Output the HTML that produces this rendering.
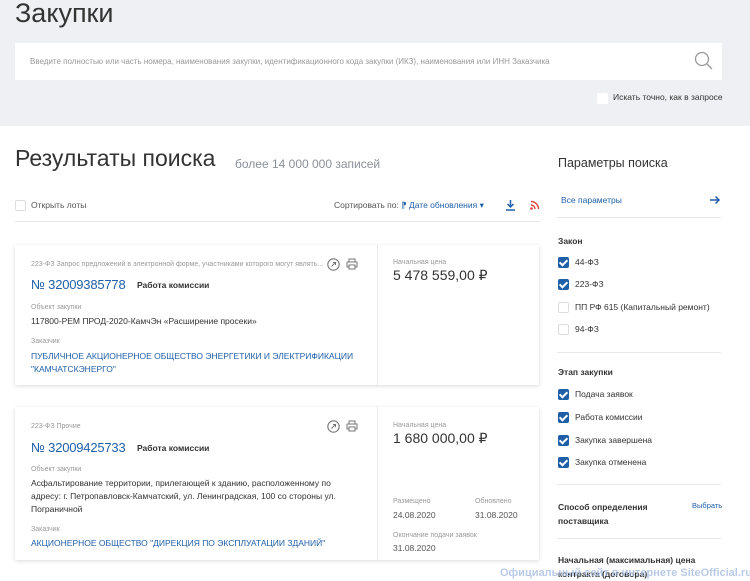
<!DOCTYPE html>
<html><head><meta charset="utf-8"><style>
*{margin:0;padding:0;box-sizing:border-box}
body{width:750px;height:581px;overflow:hidden;background:#fff;font-family:"Liberation Sans","Noto Sans CJK SC",sans-serif;color:#333;position:relative}
.a{position:absolute;white-space:nowrap}
.top{position:absolute;left:0;top:0;width:750px;height:126px;background:#eef0f3}
.search{position:absolute;left:15px;top:43px;width:707px;height:37px;background:#fff}
.card{position:absolute;left:15px;width:524px;background:#fff;box-shadow:0 1px 4px rgba(0,0,0,.15)}
.card .div{position:absolute;left:362px;top:0;bottom:0;width:1px;background:#e6e8ec}
.sm{font-size:7px;color:#999}
.blue{color:#1f5fa8}
.num{font-size:13px;letter-spacing:-0.2px}
.cb{position:absolute;width:11px;height:11px;border-radius:2px}
.on{background:#1f5fa8}
.on:after{content:"";position:absolute;left:3px;top:1px;width:3px;height:6px;border:solid #fff;border-width:0 2px 2px 0;transform:rotate(45deg)}
.off{border:1px solid #ddd;background:#fff}
.lb{font-size:8.5px;color:#333}
.hr{position:absolute;left:557px;width:164px;height:1px;background:#e6e8ec}
</style></head><body>
<div class="top"></div>
<div class="a" style="left:15px;top:-2px;font-size:27px;color:#333">Закупки</div>
<div class="search"></div>
<div class="a" style="left:30px;top:57px;font-size:8px;color:#999">Введите полностью или часть номера, наименования закупки, идентификационного кода закупки (ИКЗ), наименования или ИНН Заказчика</div>
<svg class="a" style="left:694px;top:51px" width="20" height="20" viewBox="0 0 20 20"><circle cx="8" cy="8" r="6.5" fill="none" stroke="#999" stroke-width="1.3"/><path d="M13 13l5 5" stroke="#999" stroke-width="1.3"/></svg>
<div class="cb off" style="left:597px;top:93px;border:none"></div>
<div class="a" style="left:613px;top:92px;font-size:8.5px;color:#333">Искать точно, как в запросе</div>

<div class="a" style="left:15px;top:145px;font-size:23px;color:#333">Результаты поиска</div>
<div class="a" style="left:235px;top:157px;font-size:12px;color:#8a9099">более 14 000 000 записей</div>
<div class="cb off" style="left:15px;top:200px"></div>
<div class="a" style="left:31px;top:200px;font-size:8.5px;color:#555">Открыть лоты</div>
<div class="a" style="left:334px;top:200px;font-size:8.5px;color:#555">Сортировать по: <span class="blue">⁋ Дате обновления ▾</span></div>
<svg class="a" style="left:505px;top:199px" width="11" height="12" viewBox="0 0 11 12"><path d="M5.5 1v7M2.5 5l3 3 3-3M1 11h9" stroke="#1f5fa8" stroke-width="1.5" fill="none"/></svg>
<svg class="a" style="left:530px;top:200px" width="10" height="10" viewBox="0 0 10 10"><circle cx="1.5" cy="8.5" r="1.3" fill="#e0443a"/><path d="M1 5a4 4 0 0 1 4 4M1 1.5a7.5 7.5 0 0 1 7.5 7.5" stroke="#e0443a" stroke-width="1.4" fill="none"/></svg>
<div style="position:absolute;left:15px;top:221px;width:525px;height:1px;background:#e6e8ec"></div>

<div class="card" style="top:245px;height:140px"><div class="div"></div></div>
<div class="a sm" style="left:31px;top:261px">223-ФЗ Запрос предложений в электронной форме, участниками которого могут являть...</div>
<svg class="a" style="left:327px;top:258px" width="13" height="13" viewBox="0 0 13 13"><circle cx="6.5" cy="6.5" r="5.7" fill="none" stroke="#777" stroke-width="1.1"/><path d="M4.5 8.5l4-4M6 4.5h2.5V7" stroke="#777" stroke-width="1" fill="none"/></svg>
<svg class="a" style="left:346px;top:258px" width="12" height="12" viewBox="0 0 12 12"><path d="M3 4V1h6v3M1 4h10v5H9M3 9H1V4M3 7h6v4H3z" stroke="#777" stroke-width="1" fill="none"/></svg>
<div class="a blue num" style="left:31px;top:277px">№ 32009385778</div>
<div class="a" style="left:137px;top:280px;font-size:8.5px;font-weight:bold">Работа комиссии</div>
<div class="a sm" style="left:31px;top:304px">Объект закупки</div>
<div class="a" style="left:31px;top:316px;font-size:8.5px">117800-РЕМ ПРОД-2020-КамчЭн «Расширение просеки»</div>
<div class="a sm" style="left:31px;top:338px">Заказчик</div>
<div class="a blue" style="left:31px;top:350px;font-size:8.5px;line-height:13px">ПУБЛИЧНОЕ АКЦИОНЕРНОЕ ОБЩЕСТВО ЭНЕРГЕТИКИ И ЭЛЕКТРИФИКАЦИИ<br>"КАМЧАТСКЭНЕРГО"</div>
<div class="a sm" style="left:393px;top:259px">Начальная цена</div>
<div class="a" style="left:393px;top:267px;font-size:14px">5 478 559,00 ₽</div>

<div class="card" style="top:407px;height:153px"><div class="div"></div></div>
<div class="a sm" style="left:31px;top:423px">223-ФЗ Прочие</div>
<svg class="a" style="left:327px;top:420px" width="13" height="13" viewBox="0 0 13 13"><circle cx="6.5" cy="6.5" r="5.7" fill="none" stroke="#777" stroke-width="1.1"/><path d="M4.5 8.5l4-4M6 4.5h2.5V7" stroke="#777" stroke-width="1" fill="none"/></svg>
<svg class="a" style="left:346px;top:420px" width="12" height="12" viewBox="0 0 12 12"><path d="M3 4V1h6v3M1 4h10v5H9M3 9H1V4M3 7h6v4H3z" stroke="#777" stroke-width="1" fill="none"/></svg>
<div class="a blue num" style="left:31px;top:440px">№ 32009425733</div>
<div class="a" style="left:137px;top:443px;font-size:8.5px;font-weight:bold">Работа комиссии</div>
<div class="a sm" style="left:31px;top:466px">Объект закупки</div>
<div class="a" style="left:31px;top:477px;font-size:8.5px;line-height:13px">Асфальтирование территории, прилегающей к зданию, расположенному по<br>адресу: г. Петропавловск-Камчатский, ул. Ленинградская, 100 со стороны ул.<br>Пограничной</div>
<div class="a sm" style="left:31px;top:526px">Заказчик</div>
<div class="a blue" style="left:31px;top:538px;font-size:8.5px">АКЦИОНЕРНОЕ ОБЩЕСТВО "ДИРЕКЦИЯ ПО ЭКСПЛУАТАЦИИ ЗДАНИЙ"</div>
<div class="a sm" style="left:393px;top:422px">Начальная цена</div>
<div class="a" style="left:393px;top:430px;font-size:14px">1 680 000,00 ₽</div>
<div class="a sm" style="left:393px;top:498px">Размещено</div>
<div class="a" style="left:393px;top:510px;font-size:8.5px;color:#555">24.08.2020</div>
<div class="a sm" style="left:475px;top:498px">Обновлено</div>
<div class="a" style="left:475px;top:510px;font-size:8.5px;color:#555">31.08.2020</div>
<div class="a sm" style="left:393px;top:532px">Окончание подачи заявок</div>
<div class="a" style="left:393px;top:543px;font-size:8.5px;color:#555">31.08.2020</div>

<div class="a" style="left:558px;top:156px;font-size:12.5px;color:#333">Параметры поиска</div>
<div class="a blue" style="left:561px;top:195px;font-size:8.5px">Все параметры</div>
<svg class="a" style="left:709px;top:195px" width="12" height="10" viewBox="0 0 12 10"><path d="M1 5h9M6.5 1.5L10 5 6.5 8.5" stroke="#1f5fa8" stroke-width="1.5" fill="none"/></svg>
<div class="hr" style="top:217px"></div>
<div class="a" style="left:558px;top:236px;font-size:8.5px;font-weight:bold">Закон</div>
<div class="cb on" style="left:558px;top:257px"></div><div class="a lb" style="left:575px;top:257px">44-ФЗ</div>
<div class="cb on" style="left:558px;top:279px"></div><div class="a lb" style="left:575px;top:279px">223-ФЗ</div>
<div class="cb off" style="left:558px;top:302px"></div><div class="a lb" style="left:575px;top:302px">ПП РФ 615 (Капитальный ремонт)</div>
<div class="cb off" style="left:558px;top:324px"></div><div class="a lb" style="left:575px;top:324px">94-ФЗ</div>
<div class="hr" style="top:352px"></div>
<div class="a" style="left:558px;top:367px;font-size:8.5px;font-weight:bold">Этап закупки</div>
<div class="cb on" style="left:558px;top:389px"></div><div class="a lb" style="left:575px;top:389px">Подача заявок</div>
<div class="cb on" style="left:558px;top:412px"></div><div class="a lb" style="left:575px;top:412px">Работа комиссии</div>
<div class="cb on" style="left:558px;top:435px"></div><div class="a lb" style="left:575px;top:435px">Закупка завершена</div>
<div class="cb on" style="left:558px;top:457px"></div><div class="a lb" style="left:575px;top:457px">Закупка отменена</div>
<div class="hr" style="top:484px"></div>
<div class="a" style="left:558px;top:500px;font-size:8.5px;font-weight:bold;line-height:14px">Способ определения<br>поставщика</div>
<div class="a blue" style="left:692px;top:501px;font-size:7.5px">Выбрать</div>
<div class="hr" style="top:538px"></div>
<div class="a" style="left:558px;top:553px;font-size:8.5px;font-weight:bold;line-height:14px">Начальная (максимальная) цена<br>контракта (договора)</div>
<div class="a" style="left:500px;top:567px;font-size:11px;font-weight:bold;color:#a8bde0;opacity:.8">Официальный сайт в интернете SiteOfficial.ru</div>
</body></html>
